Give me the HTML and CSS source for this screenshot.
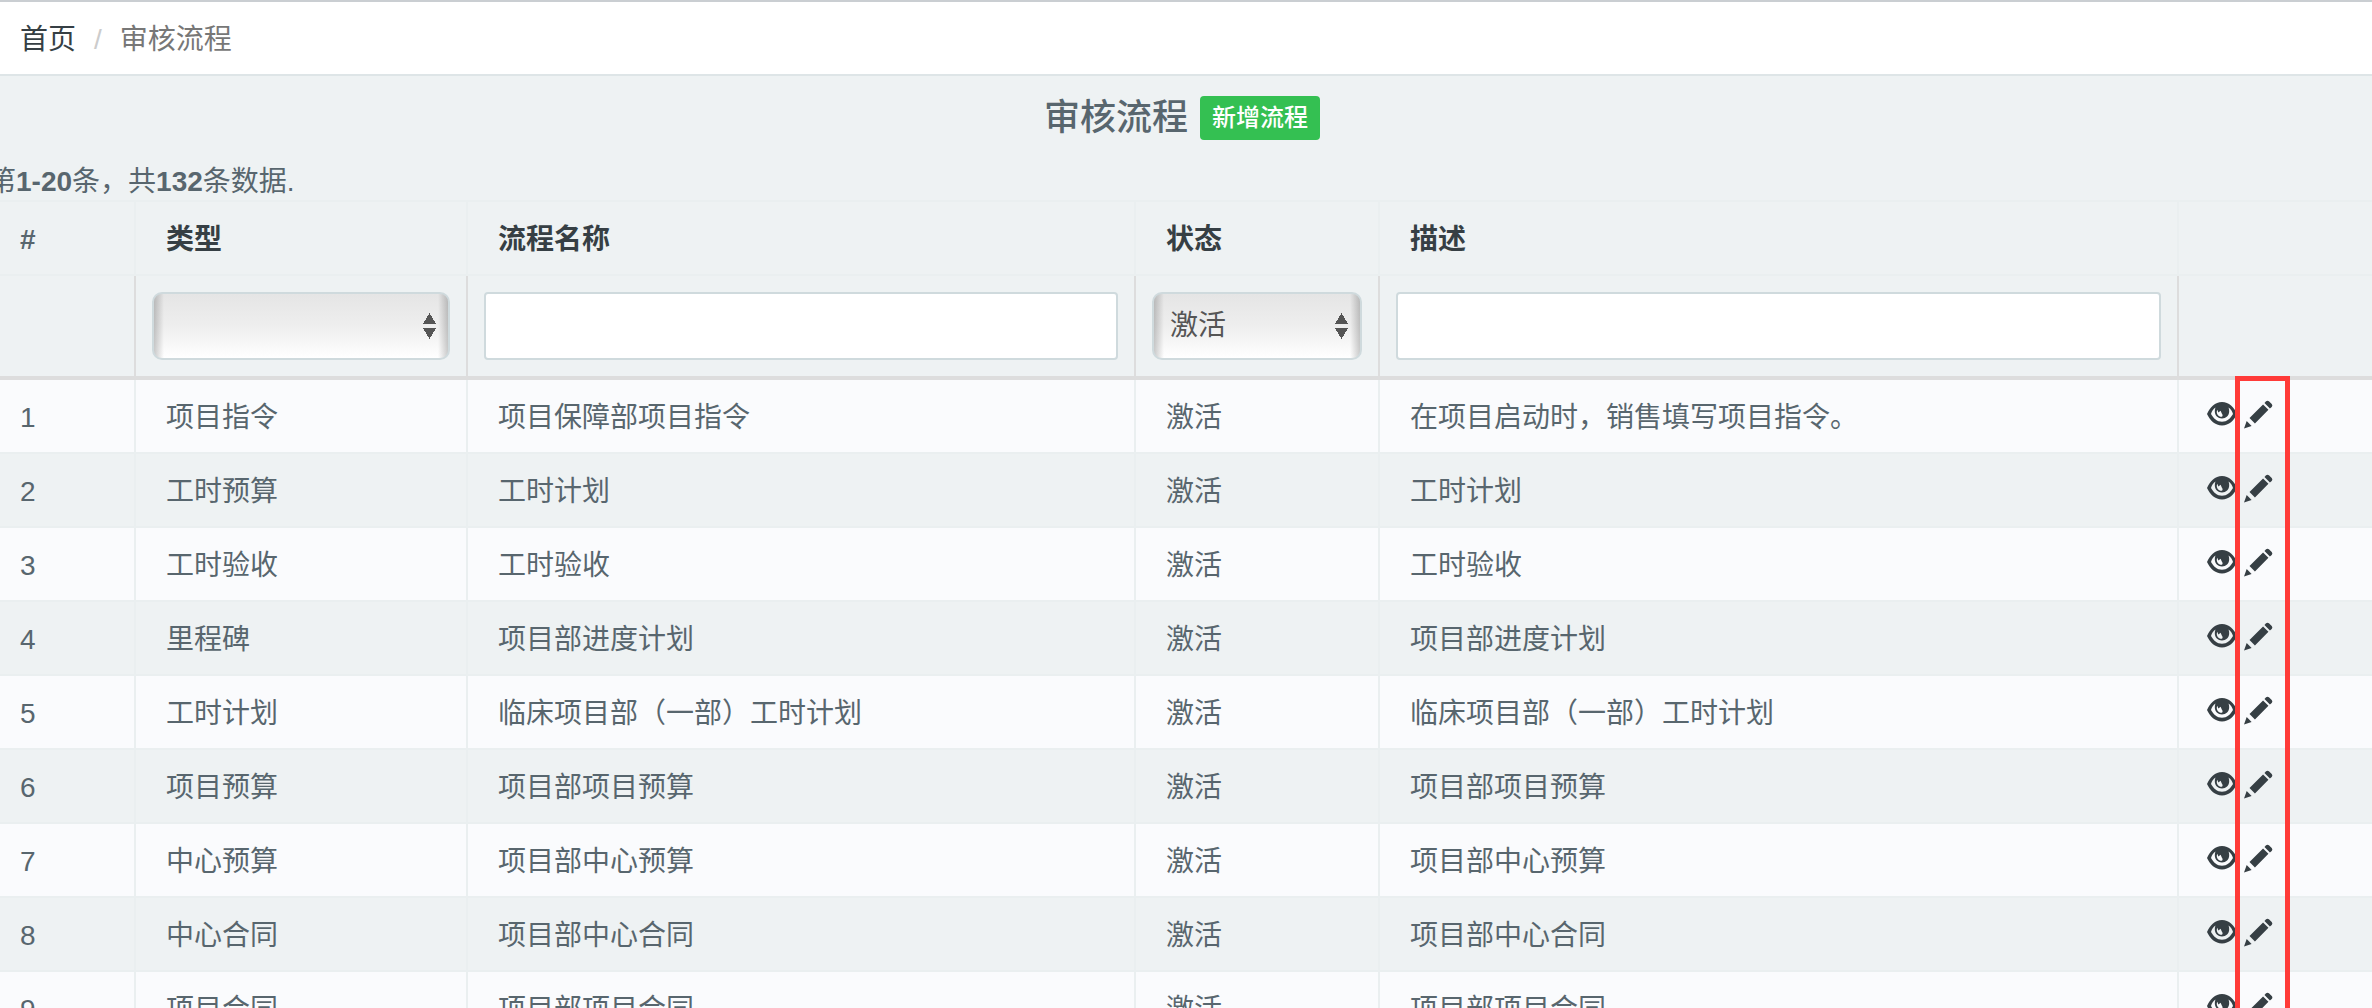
FILE: index.html
```html
<!DOCTYPE html>
<html lang="zh-CN">
<head>
<meta charset="utf-8">
<title>审核流程</title>
<link rel="stylesheet" href="styles.css">
</head>
<body>
<svg class="sprite" aria-hidden="true">
  <symbol id="icon-eye" viewBox="0 0 30 24">
    <path fill-rule="evenodd" d="M15 0C22 0 27 5 30 12C27 18.500 22 23.500 15 23.500C8 23.500 3 18.500 0 12C3 5 8 0 15 0ZM8.500 5.500C6.300 7 4.800 9 4 12C6.500 16.500 10 19.700 15 19.700C20 19.700 23.500 16.500 26 12C25.200 9 23.700 7 21.500 5.500C22 6.700 22.200 8 22.200 9.300C22.200 13.500 19 16.500 15 16.500C11 16.500 7.800 13.500 7.800 9.300C7.800 8 8 6.700 8.500 5.500ZM10.300 7.800C9.300 9.500 9.800 12 11.200 13.400C12.600 14.700 14.500 15 15.200 14.400C16 13.500 15.500 12.600 14.800 11.500L13.600 8.700L11.400 10.500Z"/>
  </symbol>
  <symbol id="icon-pencil" viewBox="0 0 30 30">
    <path d="M22.800 1.300Q24.300 0 25.800 1.300L28.700 4.200Q30 5.700 28.700 7.200L26.800 8.800L21.200 3.200ZM19.700 4.600L25.300 10.200L11.300 24.200L5.700 18.600ZM2.800 21.800L7.900 26.900L0 29.600Z"/>
  </symbol>
</svg>
<div class="page">
  <nav class="breadcrumb" aria-label="导航">
    <a href="#">首页</a><span class="slash">/</span><span class="current">审核流程</span>
  </nav>
  <header class="title-bar">
    <h1>审核流程</h1>
    <button type="button" class="btn-add">新增流程</button>
  </header>
  <p class="summary">第<b>1-20</b>条，共<b>132</b>条数据.</p>
  <div class="grid">
    <table>
      <colgroup><col class="c-num"><col class="c-type"><col class="c-name"><col class="c-status"><col class="c-desc"><col class="c-act"></colgroup>
      <thead>
        <tr><th class="num">#</th><th><a href="#">类型</a></th><th><a href="#">流程名称</a></th><th><a href="#">状态</a></th><th><a href="#">描述</a></th><th></th></tr>
        <tr class="filters">
          <td></td>
          <td><select aria-label="类型"><option></option><option>项目指令</option></select></td>
          <td><input type="text" aria-label="流程名称"></td>
          <td><select aria-label="状态"><option>激活</option></select></td>
          <td><input type="text" aria-label="描述"></td>
          <td></td>
        </tr>
      </thead>
      <tbody>
        <tr><td>1</td><td>项目指令</td><td>项目保障部项目指令</td><td>激活</td><td>在项目启动时，销售填写项目指令。</td><td><div class="actions"><a href="#" aria-label="查看"><svg class="eye"><use href="#icon-eye"/></svg></a><a href="#" aria-label="编辑"><svg class="pencil"><use href="#icon-pencil"/></svg></a></div></td></tr>
        <tr><td>2</td><td>工时预算</td><td>工时计划</td><td>激活</td><td>工时计划</td><td><div class="actions"><a href="#" aria-label="查看"><svg class="eye"><use href="#icon-eye"/></svg></a><a href="#" aria-label="编辑"><svg class="pencil"><use href="#icon-pencil"/></svg></a></div></td></tr>
        <tr><td>3</td><td>工时验收</td><td>工时验收</td><td>激活</td><td>工时验收</td><td><div class="actions"><a href="#" aria-label="查看"><svg class="eye"><use href="#icon-eye"/></svg></a><a href="#" aria-label="编辑"><svg class="pencil"><use href="#icon-pencil"/></svg></a></div></td></tr>
        <tr><td>4</td><td>里程碑</td><td>项目部进度计划</td><td>激活</td><td>项目部进度计划</td><td><div class="actions"><a href="#" aria-label="查看"><svg class="eye"><use href="#icon-eye"/></svg></a><a href="#" aria-label="编辑"><svg class="pencil"><use href="#icon-pencil"/></svg></a></div></td></tr>
        <tr><td>5</td><td>工时计划</td><td>临床项目部（一部）工时计划</td><td>激活</td><td>临床项目部（一部）工时计划</td><td><div class="actions"><a href="#" aria-label="查看"><svg class="eye"><use href="#icon-eye"/></svg></a><a href="#" aria-label="编辑"><svg class="pencil"><use href="#icon-pencil"/></svg></a></div></td></tr>
        <tr><td>6</td><td>项目预算</td><td>项目部项目预算</td><td>激活</td><td>项目部项目预算</td><td><div class="actions"><a href="#" aria-label="查看"><svg class="eye"><use href="#icon-eye"/></svg></a><a href="#" aria-label="编辑"><svg class="pencil"><use href="#icon-pencil"/></svg></a></div></td></tr>
        <tr><td>7</td><td>中心预算</td><td>项目部中心预算</td><td>激活</td><td>项目部中心预算</td><td><div class="actions"><a href="#" aria-label="查看"><svg class="eye"><use href="#icon-eye"/></svg></a><a href="#" aria-label="编辑"><svg class="pencil"><use href="#icon-pencil"/></svg></a></div></td></tr>
        <tr><td>8</td><td>中心合同</td><td>项目部中心合同</td><td>激活</td><td>项目部中心合同</td><td><div class="actions"><a href="#" aria-label="查看"><svg class="eye"><use href="#icon-eye"/></svg></a><a href="#" aria-label="编辑"><svg class="pencil"><use href="#icon-pencil"/></svg></a></div></td></tr>
        <tr><td>9</td><td>项目合同</td><td>项目部项目合同</td><td>激活</td><td>项目部项目合同</td><td><div class="actions"><a href="#" aria-label="查看"><svg class="eye"><use href="#icon-eye"/></svg></a><a href="#" aria-label="编辑"><svg class="pencil"><use href="#icon-pencil"/></svg></a></div></td></tr>
      </tbody>
    </table>
    <div class="highlight"></div>
  </div>
</div>
</body>
</html>
```
FILE: styles.css
```css
* { box-sizing: border-box; }
body {
  margin: 0;
  background: #eef2f3;
  color: #58666e;
  font: 28px/40px "Liberation Sans", "Noto Sans CJK SC", sans-serif;
}
a { color: #363f44; text-decoration: none; }
.sprite { display: none; }
.page { height: 100vh; overflow: hidden; }

.breadcrumb {
  display: flex;
  padding: 18px 20px 14px;
  background: #fff;
  border-top: 2px solid #caced2;
  border-bottom: 2px solid #dee5e7;
}
.slash { padding: 0 18px; color: #ccc; }
.current { color: #777; }

.title-bar {
  display: flex;
  justify-content: center;
  align-items: center;
  gap: 12px;
  height: 84px;
  padding-right: 8px;
}
h1 { margin: 0; font-size: 36px; font-weight: 500; line-height: 40px; }
.btn-add {
  height: 44px;
  padding: 0 12px;
  border: 0;
  border-radius: 4px;
  background: #34c052;
  color: #fff;
  font: 500 24px/40px "Liberation Sans", "Noto Sans CJK SC", sans-serif;
}
.summary { margin: 0 0 0 -12px; padding-top: 4px; line-height: 36px; }

.grid { position: relative; border-top: 2px solid #eaeff0; }
table { width: 100%; table-layout: fixed; border-spacing: 0; }
.c-num { width: 136px; }
.c-type { width: 332px; }
.c-name { width: 28.16%; }
.c-status { width: 244px; }
.c-act { width: 193px; }
th, td {
  padding: 18px 30px 14px;
  height: 74px;
  border-right: 2px solid #eaeff0;
  border-bottom: 2px solid #eaeff0;
  text-align: left;
  vertical-align: top;
  white-space: nowrap;
}
th { font-weight: 700; }
th:first-child, td:first-child { padding-left: 20px; }
th:last-child, td:last-child { border-right: 0; }
td:last-child { padding-left: 28px; }
tbody tr:nth-child(odd) { background: #fafbfd; }

.filters td {
  height: 104px;
  padding: 16px;
  border-right-color: #ddd;
  border-bottom: 4px solid #ddd;
}
input, select {
  display: block;
  width: 100%;
  height: 68px;
  padding: 0 16px;
  border: 2px solid #cfdadd;
  border-radius: 4px;
  background: #fff;
  color: #555;
  font: inherit;
}
select {
  appearance: none;
  border-radius: 10px;
  background:
    conic-gradient(from 149deg at 50% 0, #555 62deg, transparent 0) right 12px top 19px / 13px 11px no-repeat,
    conic-gradient(from -31deg at 50% 100%, #555 62deg, transparent 0) right 12px top 34px / 13px 11px no-repeat,
    linear-gradient(90deg, #0003, transparent 10px) no-repeat,
    linear-gradient(270deg, #0003, transparent 10px) no-repeat,
    linear-gradient(#e5e5e5, #eee 50%, #fff);
}

.actions { display: flex; align-items: center; gap: 7px; height: 32px; }
.actions a { display: flex; }
.actions svg { fill: #363f44; }
.eye { width: 30px; height: 24px; }
.pencil { width: 29px; height: 29px; }

/* Marks the edit column; sits above the table */
.highlight {
  position: absolute;
  top: 174px;
  right: 82px;
  bottom: 0;
  width: 55px;
  border: 5px solid #ff3b38;
}
```
